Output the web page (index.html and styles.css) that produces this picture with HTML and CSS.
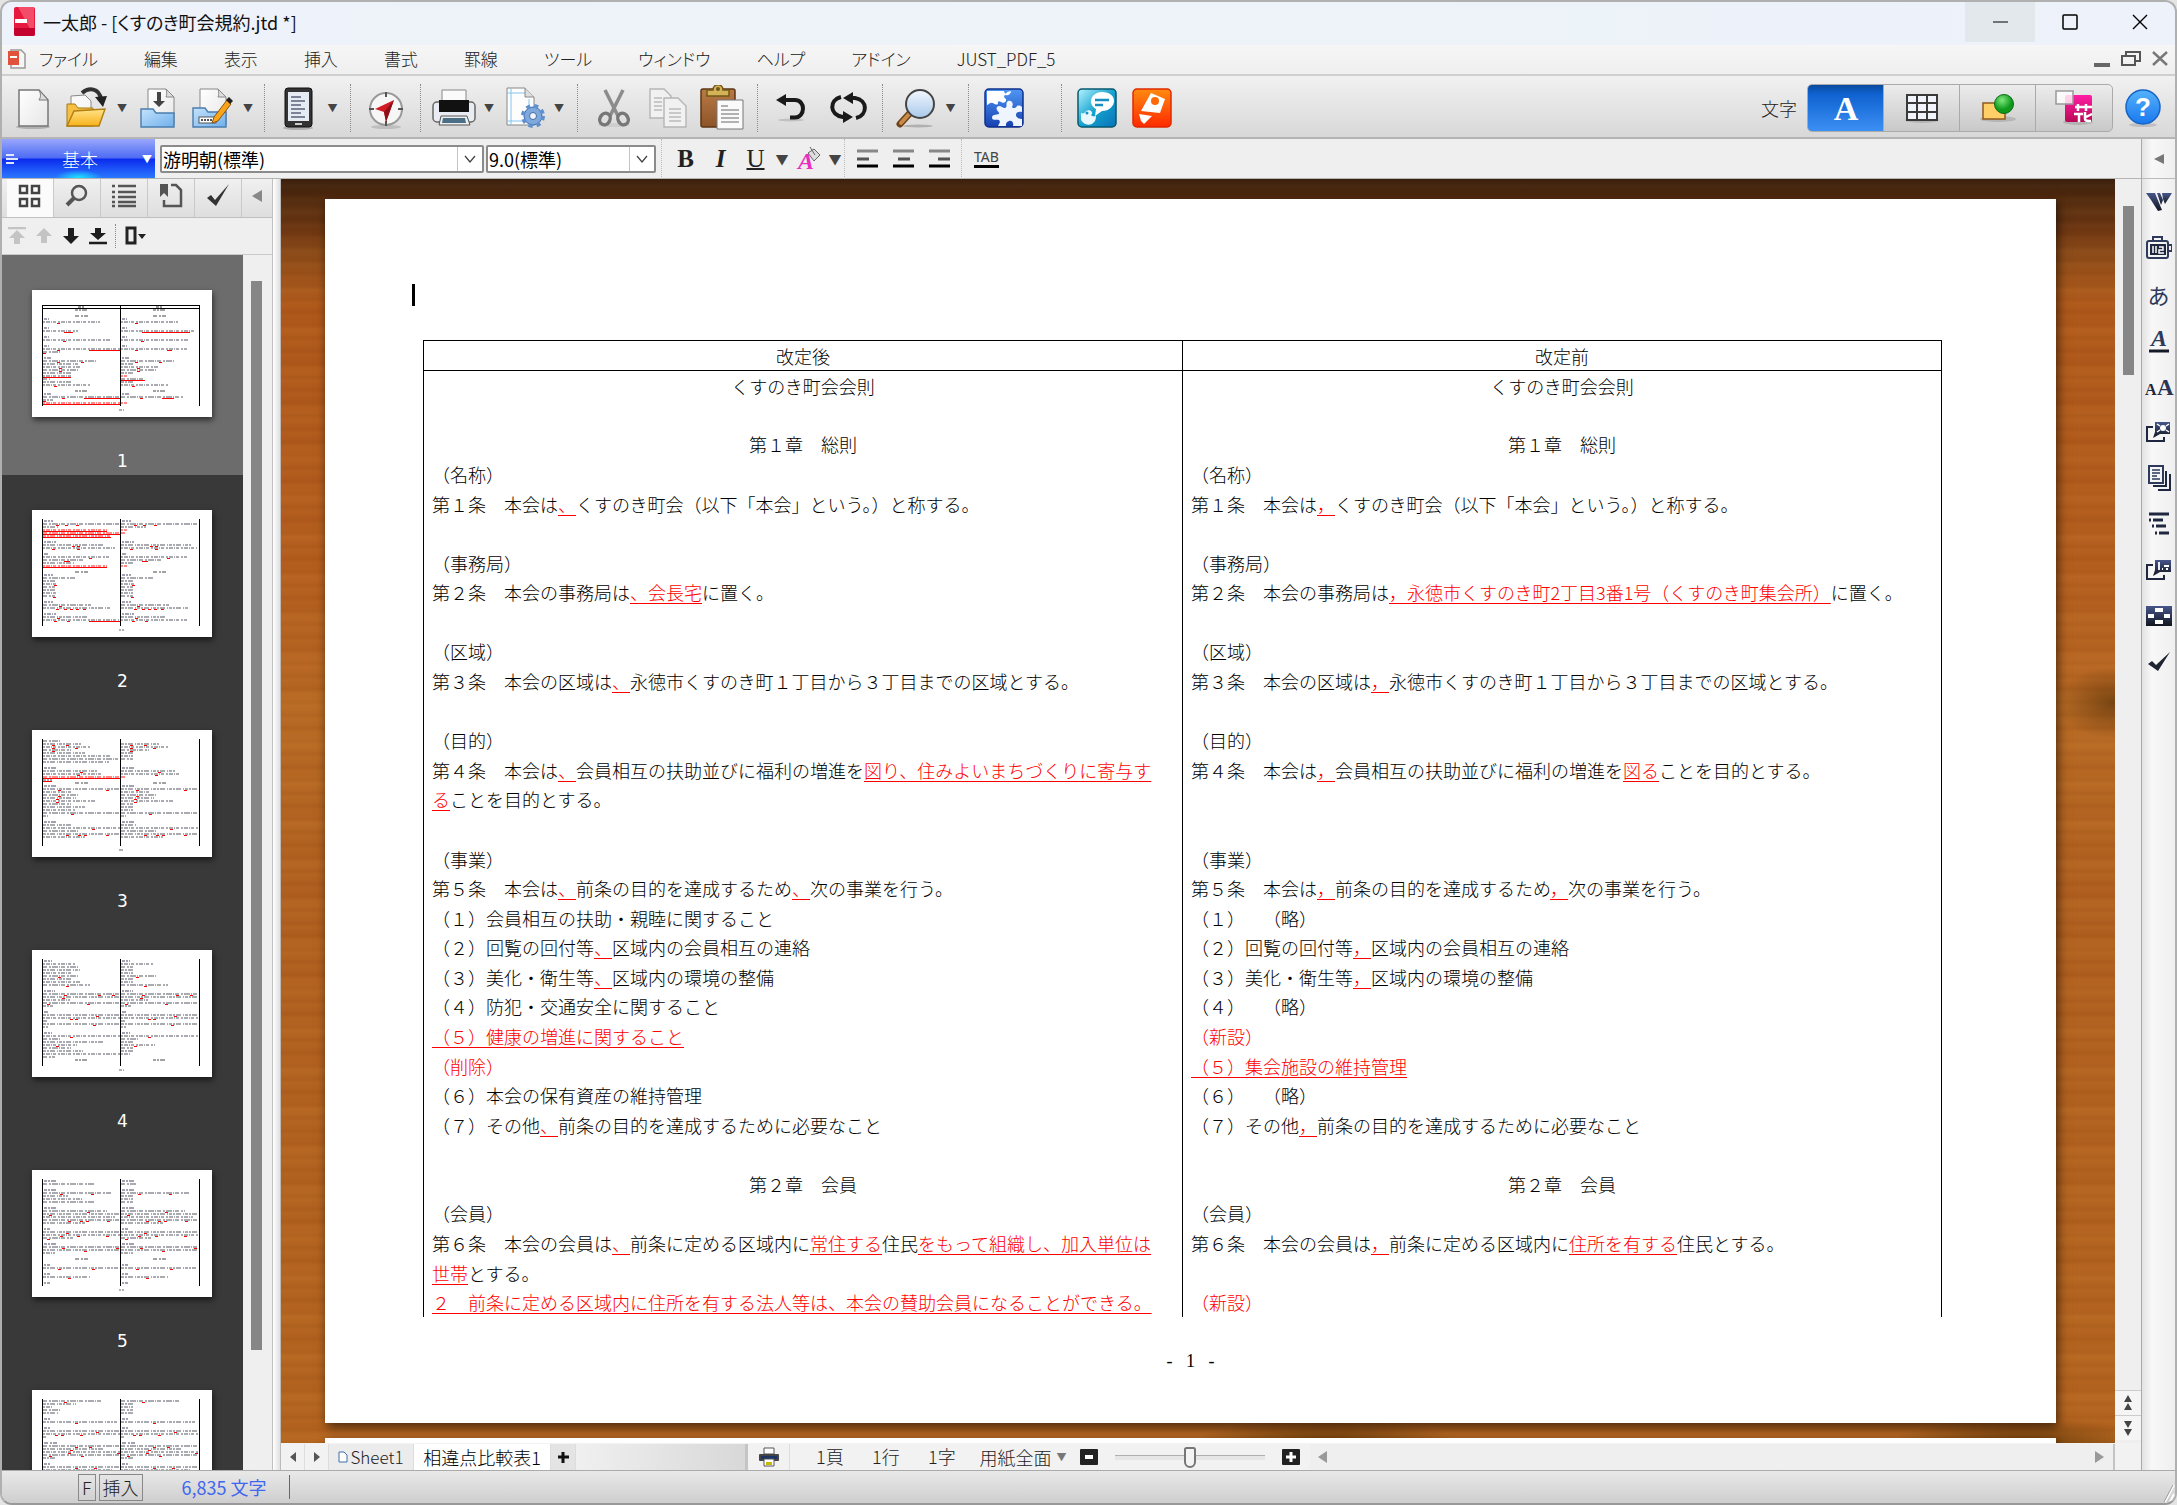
FILE: index.html
```html
<!DOCTYPE html>
<html lang="ja">
<head>
<meta charset="utf-8">
<title>一太郎 - [くすのき町会規約.jtd *]</title>
<link rel="stylesheet" href="styles.css">
</head>
<body>
<svg class="defs" width="0" height="0" aria-hidden="true">
  <defs>
    <linearGradient id="paper" x2="1" y2="1"><stop offset="0" stop-color="#fff"/><stop offset="1" stop-color="#e6e6e6"/></linearGradient>
    <linearGradient id="folderY" x2="0" y2="1"><stop offset="0" stop-color="#ffe38a"/><stop offset="1" stop-color="#f7b21a"/></linearGradient>
    <linearGradient id="folderB" x2="1" y2="1"><stop offset="0" stop-color="#c4e2fb"/><stop offset="1" stop-color="#6fb0ec"/></linearGradient>
    <linearGradient id="lens" x2="0" y2="1"><stop offset="0" stop-color="#f2f8ff"/><stop offset="1" stop-color="#a9c8ea"/></linearGradient>
    <linearGradient id="navy" x2="0" y2="1"><stop offset="0" stop-color="#46568a"/><stop offset="1" stop-color="#12161f"/></linearGradient>
    <linearGradient id="wood" x2="0" y2="1"><stop offset="0" stop-color="#b97a45"/><stop offset="1" stop-color="#8d5429"/></linearGradient>
    <linearGradient id="blueTile" x2="0" y2="1"><stop offset="0" stop-color="#4f97f5"/><stop offset="1" stop-color="#1740b0"/></linearGradient>
    <linearGradient id="cyanTile" x2="1" y2="1"><stop offset="0" stop-color="#b5f4ff"/><stop offset=".5" stop-color="#17a3d0"/><stop offset="1" stop-color="#0673b8"/></linearGradient>
    <linearGradient id="redTile" x2="0" y2="1"><stop offset="0" stop-color="#ff8a10"/><stop offset="1" stop-color="#ff2a00"/></linearGradient>
    <linearGradient id="pinkTile" x2="0" y2="1"><stop offset="0" stop-color="#ff1da4"/><stop offset="1" stop-color="#b80a54"/></linearGradient>
    <radialGradient id="green" cx=".4" cy=".3"><stop offset="0" stop-color="#7fe87f"/><stop offset="1" stop-color="#0f9a1b"/></radialGradient>
    <linearGradient id="help" x2="0" y2="1"><stop offset="0" stop-color="#55b2fb"/><stop offset="1" stop-color="#1a78ee"/></linearGradient>
  </defs>
</svg>

<div class="window">
  <header class="titlebar">
    <svg class="app-icon" width="24" height="32" viewBox="0 0 24 32"><rect x="1" y="1" width="21" height="29" rx="2" fill="#e8193f"/><path d="M5 1h16v29z" fill="#f7637c" opacity=".7"/><path d="M1 22h21v6a2 2 0 0 1-2 2H3a2 2 0 0 1-2-2z" fill="#c4002f"/><rect x="2" y="13" width="12" height="4" fill="#fff"/></svg>
    <h1 class="title">一太郎 - [くすのき町会規約.jtd *]</h1>
    <div class="caption-buttons">
      <button class="cap cap-min" aria-label="最小化"><svg width="16" height="16"><path d="M1 8h15" stroke="#000"/></svg></button>
      <button class="cap" aria-label="最大化"><svg width="16" height="16"><rect x="1" y="1" width="14" height="14" rx="1" fill="none" stroke="#000" stroke-width="1.5"/></svg></button>
      <button class="cap" aria-label="閉じる"><svg width="16" height="16"><path d="M1 1l14 14M15 1L1 15" stroke="#000" stroke-width="1.4"/></svg></button>
    </div>
  </header>

  <nav class="menubar">
    <svg class="doc-icon" width="20" height="22"><path d="M4 2h10l4 4v14H4z" fill="#f6f6f6" stroke="#999" stroke-width="1.5"/><rect x="1" y="3" width="11" height="14" fill="#e0523c"/><rect x="3" y="8" width="7" height="2" fill="#fff"/></svg>
    <button>ファイル</button><button>編集</button><button>表示</button><button>挿入</button><button>書式</button><button>罫線</button><button>ツール</button><button>ウィンドウ</button><button>ヘルプ</button><button>アドイン</button><button>JUST_PDF_5</button>
    <div class="mdi-buttons">
      <button aria-label="文書を最小化"><svg width="18" height="20"><path d="M1 16h16" stroke="#666" stroke-width="4"/></svg></button>
      <button aria-label="文書を元に戻す"><svg width="22" height="20"><path d="M6 6V3h14v9h-4" fill="none" stroke="#555" stroke-width="2"/><path d="M2 7h13v9H2z" fill="none" stroke="#555" stroke-width="2"/></svg></button>
      <button aria-label="文書を閉じる"><svg width="18" height="20"><path d="M2 3l14 13M16 3L2 16" stroke="#777" stroke-width="2.4"/></svg></button>
    </div>
  </nav>

  <div class="toolbar">
    <div class="group g-file">
      <button class="tool" aria-label="新規作成"><svg width="40" height="44"><ellipse cx="20" cy="41" rx="17" ry="2" fill="#0003"/><path d="M6 4h20l9 10v26H6z" fill="url(#paper)" stroke="#777" stroke-width="1.5"/><path d="M26 4c2 4 2 7 0 10h9z" fill="#ddd" stroke="#777"/></svg></button>
      <button class="tool" aria-label="開く"><svg width="44" height="44"><path d="M8 22V10l14-1 6 6v10z" fill="#f8f8f8" stroke="#888"/><path d="M4 18h8l3 4h15v18H4z" fill="#f5c044" stroke="#a87812"/><path d="M11 25l31-2-6 17H4z" fill="url(#folderY)" stroke="#b07d10" stroke-width="1.4"/><path d="M19 7c7-6 17-5 19 6" fill="none" stroke="#333" stroke-width="4"/><path d="M32 11l12-1-4 11z" fill="#222"/></svg></button>
      <button class="arrow" aria-label="開くメニュー">▼</button>
      <button class="tool" aria-label="上書保存"><svg width="44" height="44"><path d="M11 3h18l8 8v28H11z" fill="url(#paper)" stroke="#888"/><path d="M29 3c1 3 1 6 0 8h8z" fill="#ddd" stroke="#888"/><path d="M20 6v9h-4l6 6 6-6h-4V6z" fill="#444"/><path d="M4 23h12l3 4h18v14H4z" fill="url(#folderB)" stroke="#4a7dad" stroke-width="1.4"/></svg></button>
      <button class="tool" aria-label="名前を付けて保存"><svg width="44" height="44"><path d="M11 3h18l8 8v28H11z" fill="url(#paper)" stroke="#888"/><path d="M29 3c1 3 1 6 0 8h8z" fill="#ddd" stroke="#888"/><path d="M4 22h12l3 4h18v15H4z" fill="url(#folderB)" stroke="#4a7dad" stroke-width="1.4"/><rect x="10" y="31" width="17" height="6" fill="#fff" stroke="#555"/><path d="M12 34h12" stroke="#555" stroke-width="2" stroke-dasharray="2 1"/><path d="M25 31l13-17 4 4-13 17-6 2z" fill="#f8a51b" stroke="#8a5510"/><path d="M37 14l3-3 4 4-3 3z" fill="#222"/></svg></button>
      <button class="arrow" aria-label="保存メニュー">▼</button>
    </div>
    <div class="group g-view">
      <button class="tool" aria-label="画面表示"><svg width="40" height="46"><ellipse cx="20" cy="43" rx="15" ry="2" fill="#0003"/><rect x="7" y="3" width="27" height="39" rx="3" fill="#333" stroke="#111"/><rect x="10" y="7" width="21" height="29" fill="#e6eaf2"/><path d="M13 12h10M13 16h14M13 20h10M13 24h14M13 28h10M13 32h14" stroke="#59627a" stroke-width="1.6"/><rect x="17" y="38" width="7" height="2" fill="#ccc"/></svg></button>
      <button class="arrow" aria-label="画面表示メニュー">▼</button>
    </div>
    <div class="group g-nav">
      <button class="tool" aria-label="ナビ"><svg width="40" height="44"><ellipse cx="20" cy="41" rx="15" ry="2" fill="#0002"/><circle cx="20" cy="23" r="16" fill="#f6f6f6" stroke="#999" stroke-width="2"/><path d="M20 6v5M20 35v5M3 23h5M32 23h5" stroke="#555" stroke-width="2"/><path d="M28 14L9 23l9 3 2 10z" fill="#d11c25"/><path d="M28 14L18 26l2 10z" fill="#8d0f18"/></svg></button>
    </div>
    <div class="group g-print">
      <button class="tool" aria-label="印刷"><svg width="46" height="44"><path d="M11 4h24v14H11z" fill="#fafafa" stroke="#888"/><rect x="2" y="16" width="42" height="20" rx="4" fill="#e9edf3" stroke="#666" stroke-width="1.5"/><path d="M8 14h30v12H8z" fill="#111"/><path d="M10 30h26l3 9H8z" fill="#eee" stroke="#555"/><path d="M12 32h22l1 5H11z" fill="#4b6f86"/></svg></button>
      <button class="arrow" aria-label="印刷メニュー">▼</button>
      <button class="tool" aria-label="用紙設定"><svg width="44" height="46"><path d="M5 3h18l9 9v28H5z" fill="#fdfdfd" stroke="#888"/><path d="M9 3v37M5 8h20M5 36h20M27 14v26" stroke="#84c4ef"/><path d="M23 3v9h9" fill="#ddd" stroke="#888"/><circle cx="31" cy="31" r="9" fill="#7fa8dc" stroke="#3d6ba8"/><circle cx="31" cy="31" r="10" fill="none" stroke="#5f8fce" stroke-width="4" stroke-dasharray="4 4"/><circle cx="31" cy="31" r="3.500" fill="#f2f6fb" stroke="#3d6ba8"/></svg></button>
      <button class="arrow" aria-label="用紙設定メニュー">▼</button>
    </div>
    <div class="group g-edit">
      <button class="tool" aria-label="切り取り"><svg width="36" height="44"><ellipse cx="18" cy="39" rx="16" ry="2" fill="#0001"/><path d="M9 4l13 26M27 4L14 30" stroke="#8c8c8c" stroke-width="3.5"/><ellipse cx="9" cy="33" rx="5" ry="6" fill="none" stroke="#777" stroke-width="3.4" transform="rotate(28 9 33)"/><ellipse cx="27" cy="33" rx="5" ry="6" fill="none" stroke="#777" stroke-width="3.4" transform="rotate(-28 27 33)"/></svg></button>
      <button class="tool" aria-label="コピー"><svg width="42" height="44"><g fill="#f1f1f1" stroke="#b5b5b5" stroke-width="1.4"><path d="M3 3h14l7 7v22H3z"/><path d="M17 12h14l8 8v21H17z"/></g><path d="M7 12h8M7 16h8M7 20h8M7 24h8M22 23h12M22 27h12M22 31h12M22 35h12" stroke="#bbb" stroke-width="1.5"/></svg></button>
      <button class="tool" aria-label="貼り付け"><svg width="46" height="46"><rect x="2" y="4" width="34" height="38" rx="2" fill="url(#wood)" stroke="#5c3413" stroke-width="1.5"/><path d="M8 5h6c0-7 10-7 10 0h6v6H8z" fill="#d5b257" stroke="#6f5818" stroke-width="1.5"/><circle cx="19" cy="4" r="2" fill="#6f5818"/><path d="M18 15h26v29H18z" fill="#fafafa" stroke="#777"/><path d="M22 21h7M22 25h18M22 29h18M22 33h18M22 37h18" stroke="#999" stroke-width="1.5"/></svg></button>
    </div>
    <div class="group g-undo">
      <button class="tool" aria-label="取り消し"><svg width="34" height="34"><ellipse cx="16" cy="29" rx="13" ry="1.5" fill="#0002"/><path d="M10 9h10c5 0 8 4 8 8.500s-3 9-8 9h-5" fill="none" stroke="#1a1a1a" stroke-width="4"/><path d="M1 9l10-6v12z" fill="#1a1a1a"/></svg></button>
      <button class="tool" aria-label="繰り返し"><svg width="40" height="34"><path d="M13 6C1 9 1 24 15 26h3M28 27c12-3 12-18-1-20h-5" fill="none" stroke="#1a1a1a" stroke-width="4"/><path d="M15 7l10-6v12zM25 26l-10-6v12z" fill="#1a1a1a"/></svg></button>
    </div>
    <div class="group g-find">
      <button class="tool" aria-label="検索"><svg width="40" height="44"><ellipse cx="22" cy="40" rx="15" ry="1.500" fill="#0003"/><path d="M14 27L4 38" stroke="#6f4317" stroke-width="7" stroke-linecap="round"/><path d="M14 27L5 37" stroke="#c98b49" stroke-width="4" stroke-linecap="round"/><circle cx="24" cy="18" r="14" fill="url(#lens)" stroke="#444" stroke-width="2"/></svg></button>
      <button class="arrow" aria-label="検索メニュー">▼</button>
    </div>
    <div class="group g-addon">
      <button class="tool" aria-label="オプション"><svg width="42" height="44"><rect x="2" y="3" width="38" height="38" rx="4" fill="url(#blueTile)" stroke="#0f2f8c" stroke-width="1.500"/><path d="M4 5h17c0 3 3 3 3 1l4-1c0 3-3 5-5 4-3 0-2 3 0 4 1 3-3 5-5 3-2-2-4 0-3 2-3 2-5-2-7-1-2 0-3 2-4 2z" fill="#fff"/><path d="M25 15c4-1 6 3 4 6 1 2 4 1 5-1 2-1 4 0 5 1v5c-3-1-6 0-6 3s4 4 6 4v7h-9c1-3-1-6-4-5s-3 3-3 5h-8c1-2 3-4 1-6-3-1-6 1-7-2 0-4 4-3 7-4 1-2-4-4-2-7 3-3 5 1 8 1 3-1 0-5 3-7z" fill="#eef5ff"/></svg></button>
    </div>
    <div class="group g-apps">
      <button class="tool" aria-label="アイデア"><svg width="42" height="44"><rect x="2" y="3" width="38" height="38" rx="4" fill="url(#cyanTile)" stroke="#06576d" stroke-width="1.500"/><path d="M26 6c8 0 12 4 12 9s-5 10-12 10l-7 5 1-7c-9-5-5-17 6-17z" fill="#fff"/><path d="M19 14h14M19 19h8" stroke="#178fc0" stroke-width="2.500"/><path d="M5 27c2 1 4 0 5-2 3-2 7 0 6 3-2 1 0 3 4 2 0 12-14 10-15 3z" fill="#e8f8fd"/><circle cx="11" cy="27" r="1.500" fill="#178fc0"/></svg></button>
      <button class="tool" aria-label="パレット"><svg width="42" height="44"><rect x="2" y="3" width="38" height="38" rx="4" fill="url(#redTile)" stroke="#e02800" stroke-width="1.500"/><path d="M20 7l14 6-5 14-19-2z" fill="#fff"/><circle cx="24" cy="15" r="4" fill="#ff6a08"/><path d="M8 28l13 2-8 8-3-3z" fill="#fff"/></svg></button>
    </div>
    <div class="mode">
      <span class="mode-label">文字</span>
      <div class="mode-set">
        <button class="on" aria-label="文字"><svg width="30" height="36"><text x="15" y="30" text-anchor="middle" class="serif-a">A</text></svg></button>
        <button aria-label="罫線"><svg width="36" height="32"><ellipse cx="18" cy="28" rx="17" ry="3" fill="#0002"/><rect x="2" y="2" width="32" height="27" fill="#3a3a3a"/><path d="M4 4h8v6H4zM14 4h8v6h-8zM24 4h8v6h-8zM4 12h8v7H4zM14 12h8v7h-8zM24 12h8v7h-8zM4 21h8v6H4zM14 21h8v6h-8zM24 21h8v6h-8z" fill="#f1f4fa"/></svg></button>
        <button aria-label="作図"><svg width="38" height="34"><ellipse cx="19" cy="28" rx="18" ry="3" fill="#0002"/><rect x="4" y="12" width="22" height="16" fill="#ffd068" stroke="#8f5a1c" stroke-width="1.500"/><circle cx="25" cy="13" r="9.500" fill="url(#green)" stroke="#0c6b13"/></svg></button>
        <button aria-label="テンプレート"><svg width="40" height="36"><ellipse cx="24" cy="32" rx="15" ry="3" fill="#0002"/><rect x="11" y="5" width="27" height="27" rx="2" fill="url(#pinkTile)"/><path d="M21 17h17M24 14v7M32 14v7M20 24h9M25 24v8M31 22v7c0 2 2 2 6 2M38 24l-6 3" stroke="#fff" stroke-width="2.500" fill="none"/><rect x="2" y="1" width="17" height="13" fill="#fffc" stroke="#999" stroke-width="1.500"/></svg></button>
      </div>
      <button class="help" aria-label="ヘルプ"><svg width="38" height="40"><ellipse cx="19" cy="37" rx="14" ry="2" fill="#0002"/><circle cx="19" cy="19" r="17" fill="url(#help)" stroke="#1664c4" stroke-width="1.500"/><text x="19" y="28" text-anchor="middle" class="help-q">?</text></svg></button>
    </div>
  </div>

  <div class="body">
    <div class="content">
      <div class="formatbar">
        <button class="preset"><svg width="12" height="12"><path d="M0 2h8M0 6h12M0 10h8" stroke="#dfe6ff" stroke-width="2"/></svg><span>基本</span><i>▼</i></button>
        <div class="combo combo-font"><select aria-label="フォント"><option>游明朝(標準)</option></select><svg width="25" height="24"><path d="M7 9l5 6 5-6" fill="none" stroke="#444" stroke-width="1.300"/></svg></div>
        <div class="combo combo-size"><select aria-label="文字サイズ"><option>9.0(標準)</option></select><svg width="25" height="24"><path d="M7 9l5 6 5-6" fill="none" stroke="#444" stroke-width="1.300"/></svg></div>
        <div class="fgroup f-style">
          <button class="letter bold">B</button><button class="letter italic">I</button><button class="letter under">U</button><button class="arrow big" aria-label="下線メニュー">▼</button>
          <button class="letter" aria-label="文字色"><svg width="30" height="30"><text x="12" y="25" text-anchor="middle" class="color-a">A</text><path d="M14 9l6-4 6 6-6 6z" fill="#ddd" stroke="#666"/><path d="M16 3l5 8" stroke="#666"/></svg></button><button class="arrow big" aria-label="文字色メニュー">▼</button>
        </div>
        <div class="fgroup f-align">
          <button aria-label="左寄せ"><svg width="22" height="20"><path d="M0 2h21" stroke="#888" stroke-width="3"/><path d="M0 10h12" stroke="#555" stroke-width="3"/><path d="M0 17h21" stroke="#000" stroke-width="3"/></svg></button>
          <button aria-label="センタリング"><svg width="22" height="20"><path d="M0 2h21" stroke="#888" stroke-width="3"/><path d="M5 10h12" stroke="#555" stroke-width="3"/><path d="M0 17h21" stroke="#000" stroke-width="3"/></svg></button>
          <button aria-label="右寄せ"><svg width="22" height="20"><path d="M0 2h21" stroke="#888" stroke-width="3"/><path d="M9 10h12" stroke="#555" stroke-width="3"/><path d="M0 17h21" stroke="#000" stroke-width="3"/></svg></button>
        </div>
        <button class="tab-btn">TAB</button>
      </div>

      <div class="workspace">
        <aside class="panel">
          <div class="panel-tabs">
            <button class="on" aria-label="ページ"><svg width="24" height="24"><path d="M2 2h7v7H2zM14 2h7v7h-7zM2 15h7v7H2zM14 15h7v7h-7z" fill="none" stroke="#444" stroke-width="2.500"/></svg></button>
            <button aria-label="検索"><svg width="24" height="24"><circle cx="14" cy="9" r="7" fill="none" stroke="#555" stroke-width="2.500"/><path d="M9 14l-7 7" stroke="#555" stroke-width="4"/></svg></button>
            <button aria-label="目次"><svg width="24" height="24"><path d="M0 2h3M0 8h3M0 13h3M0 18h3M0 22h3M6 2h18M6 8h18M6 13h18M6 18h18M6 22h18" stroke="#555" stroke-width="2.500"/></svg></button>
            <button aria-label="しおり"><svg width="24" height="26"><path d="M1 1h8v13l-4-4-4 4z" fill="#555"/><path d="M12 2h5l5 5v16H5v-6" fill="none" stroke="#555" stroke-width="2.500"/></svg></button>
            <button aria-label="校正"><svg width="24" height="24"><path d="M1 14l4-3 4 5L23 0 10 22z" fill="#333"/></svg></button>
            <button class="fold" aria-label="閉じる"><svg width="10" height="12"><path d="M0 6l10-6v12z" fill="#888"/></svg></button>
          </div>
          <div class="panel-tools">
            <button aria-label="先頭ページ" disabled><svg width="20" height="18"><path d="M1 1h18" stroke="#c4c4c4" stroke-width="2.500"/><path d="M10 3l8 8h-5v6H7v-6H2z" fill="#c4c4c4"/></svg></button>
            <button aria-label="前ページ" disabled><svg width="20" height="18"><path d="M10 1l8 8h-5v7H7V9H2z" fill="#c4c4c4"/></svg></button>
            <button aria-label="次ページ"><svg width="20" height="18"><path d="M10 17l8-8h-5V1H7v8H2z" fill="#1d1d1d"/></svg></button>
            <button aria-label="最終ページ"><svg width="20" height="18"><path d="M10 13l8-7h-5V1H7v5H2z" fill="#1d1d1d"/><path d="M1 16h18" stroke="#1d1d1d" stroke-width="2.500"/></svg></button>
            <button class="opt" aria-label="表示方法"><svg width="24" height="20"><path d="M3 2h8v15H3z" fill="none" stroke="#222" stroke-width="3"/><path d="M14 8h8l-4 5z" fill="#222"/></svg></button>
          </div>
          <div class="panel-body">
            <ol class="thumbs" id="thumbs"></ol>
            <div class="vbar"><div class="vbar-thumb"></div></div>
          </div>
        </aside>
        <div class="splitter"></div>
        <div class="work">
          <div class="canvas-row">
            <main class="canvas">
              <article class="sheet">
                <p class="caret-line"><span class="caret"></span></p>
                <table class="compare">
                  <thead><tr><th>改定後</th><th>改定前</th></tr></thead>
                  <tbody>
                    <tr class="mid"><td>くすのき町会会則</td><td>くすのき町会会則</td></tr>
                    <tr><td></td><td></td></tr>
                    <tr class="mid"><td>第１章　総則</td><td>第１章　総則</td></tr>
                    <tr><td>（名称）</td><td>（名称）</td></tr>
                    <tr><td>第１条　本会は<ins>、</ins>くすのき町会（以下「本会」という。）と称する。</td><td>第１条　本会は<ins>，</ins>くすのき町会（以下「本会」という。）と称する。</td></tr>
                    <tr><td></td><td></td></tr>
                    <tr><td>（事務局）</td><td>（事務局）</td></tr>
                    <tr><td>第２条　本会の事務局は<ins>、会長宅</ins>に置く。</td><td>第２条　本会の事務局は<ins>，永徳市くすのき町2丁目3番1号（くすのき町集会所）</ins>に置く。</td></tr>
                    <tr><td></td><td></td></tr>
                    <tr><td>（区域）</td><td>（区域）</td></tr>
                    <tr><td>第３条　本会の区域は<ins>、</ins>永徳市くすのき町１丁目から３丁目までの区域とする。</td><td>第３条　本会の区域は<ins>，</ins>永徳市くすのき町１丁目から３丁目までの区域とする。</td></tr>
                    <tr><td></td><td></td></tr>
                    <tr><td>（目的）</td><td>（目的）</td></tr>
                    <tr><td>第４条　本会は<ins>、</ins>会員相互の扶助並びに福利の増進を<ins>図り、住みよいまちづくりに寄与す</ins></td><td>第４条　本会は<ins>，</ins>会員相互の扶助並びに福利の増進を<ins>図る</ins>ことを目的とする。</td></tr>
                    <tr><td><ins>る</ins>ことを目的とする。</td><td></td></tr>
                    <tr><td></td><td></td></tr>
                    <tr><td>（事業）</td><td>（事業）</td></tr>
                    <tr><td>第５条　本会は<ins>、</ins>前条の目的を達成するため<ins>、</ins>次の事業を行う。</td><td>第５条　本会は<ins>，</ins>前条の目的を達成するため<ins>，</ins>次の事業を行う。</td></tr>
                    <tr><td>（１）会員相互の扶助・親睦に関すること</td><td class="full">（１）　（略）</td></tr>
                    <tr><td>（２）回覧の回付等<ins>、</ins>区域内の会員相互の連絡</td><td>（２）回覧の回付等<ins>，</ins>区域内の会員相互の連絡</td></tr>
                    <tr><td>（３）美化・衛生等<ins>、</ins>区域内の環境の整備</td><td>（３）美化・衛生等<ins>，</ins>区域内の環境の整備</td></tr>
                    <tr><td>（４）防犯・交通安全に関すること</td><td class="full">（４）　（略）</td></tr>
                    <tr><td><ins>（５）健康の増進に関すること</ins></td><td><em>（新設）</em></td></tr>
                    <tr><td><em>（削除）</em></td><td><ins>（５）集会施設の維持管理</ins></td></tr>
                    <tr><td>（６）本会の保有資産の維持管理</td><td class="full">（６）　（略）</td></tr>
                    <tr><td>（７）その他<ins>、</ins>前条の目的を達成するために必要なこと</td><td>（７）その他<ins>，</ins>前条の目的を達成するために必要なこと</td></tr>
                    <tr><td></td><td></td></tr>
                    <tr class="mid"><td>第２章　会員</td><td>第２章　会員</td></tr>
                    <tr><td>（会員）</td><td>（会員）</td></tr>
                    <tr><td>第６条　本会の会員は<ins>、</ins>前条に定める区域内に<ins>常住する</ins>住民<ins>をもって組織し、加入単位は</ins></td><td>第６条　本会の会員は<ins>，</ins>前条に定める区域内に<ins>住所を有する</ins>住民とする。</td></tr>
                    <tr><td><ins>世帯</ins>とする。</td><td></td></tr>
                    <tr><td><ins>２　前条に定める区域内に住所を有する法人等は、本会の賛助会員になることができる。</ins></td><td><em>（新設）</em></td></tr>
                  </tbody>
                </table>
                <p class="folio">-&nbsp;&nbsp; 1 &nbsp;&nbsp;-</p>
              </article>
              <article class="sheet next"></article>
            </main>
            <div class="doc-scroll">
              <div class="vbar"><div class="vbar-thumb"></div></div>
              <button aria-label="前ページ"><svg width="12" height="16"><path d="M6 0l4 7H2zM6 8l4 7H2z" fill="#444"/></svg></button>
              <button aria-label="次ページ"><svg width="12" height="16"><path d="M2 1h8L6 8zM2 9h8l-4 7z" fill="#444"/></svg></button>
            </div>
          </div>
          <div class="sheetbar">
            <button class="nudge" aria-label="前のシート"><svg width="6" height="10"><path d="M6 0v10L0 5z" fill="#555"/></svg></button>
            <button class="nudge" aria-label="次のシート"><svg width="6" height="10"><path d="M0 0v10l6-5z" fill="#555"/></svg></button>
            <button class="stab"><svg width="10" height="12"><path d="M1 1h5l3 3v7H1z" fill="#fff" stroke="#3f6fa8"/></svg>Sheet1</button>
            <button class="stab on">相違点比較表1</button>
            <button class="add" aria-label="シートの追加"><svg width="11" height="11"><path d="M5 0v11M0 5h11" stroke="#111" stroke-width="3"/></svg></button>
            <div class="filler"></div>
            <button class="print" aria-label="印刷"><svg width="22" height="20"><path d="M6 1h10v6H6z" fill="#fff" stroke="#555"/><rect x="1" y="7" width="20" height="7" rx="1" fill="#444"/><path d="M3 9h16v3H3z" fill="#1d3566"/><path d="M6 12h10v7H6z" fill="#fff" stroke="#555"/><path d="M8 15h6v3H8z" fill="#c9b900"/></svg></button>
            <span class="pos">1頁</span><span class="pos">1行</span><span class="pos">1字</span>
            <button class="zoom">用紙全面<i>▼</i></button>
            <button class="pm" aria-label="縮小"><svg width="18" height="16"><rect width="18" height="16" rx="1" fill="#222"/><path d="M5 8h8" stroke="#fff" stroke-width="4"/></svg></button>
            <input type="range" aria-label="表示倍率" min="0" max="100" value="50">
            <button class="pm" aria-label="拡大"><svg width="18" height="16"><rect width="18" height="16" rx="1" fill="#222"/><path d="M4 8h10M9 3v10" stroke="#fff" stroke-width="3"/></svg></button>
            <div class="hbar"><button aria-label="左へ"><svg width="9" height="12"><path d="M9 0v12L0 6z" fill="#999"/></svg></button><button aria-label="右へ"><svg width="9" height="12"><path d="M0 0v12l9-6z" fill="#999"/></svg></button></div>
            <div class="corner"></div>
          </div>
        </div>
      </div>
    </div>

    <nav class="sidebar">
      <button class="fold" aria-label="ツールパレット"><svg width="12" height="12"><path d="M1 6l10-5v10z" fill="#777"/></svg></button>
      <button aria-label="校正"><svg width="26" height="20"><path d="M0 1h9l2 5 5 12-4 1L5 8z" fill="url(#navy)"/><path d="M11 1h3l3 7-2 5zM16 1h10l-7 11-2-5z" fill="url(#navy)"/></svg></button>
      <button aria-label="文字数"><svg width="26" height="24"><rect x="1" y="5" width="21" height="17" rx="2" fill="none" stroke="#2e3a5c" stroke-width="2"/><path d="M7 5V1h9v4M23 9h3v6h-3" fill="none" stroke="#2e3a5c" stroke-width="2"/><rect x="4" y="8" width="16" height="11" fill="#1f2740"/><path d="M7 10v7M10 10v7M13 11h4v3h-4v3h5" stroke="#fff" stroke-width="1.500" fill="none"/></svg></button>
      <button class="kana">あ</button>
      <button aria-label="文字スタイル"><svg width="30" height="32"><text x="15" y="22" text-anchor="middle" class="style-a">A</text><path d="M5 27h20" stroke="#151a28" stroke-width="3"/></svg></button>
      <button aria-label="文字サイズ"><svg width="32" height="30"><text x="2" y="24" class="aa-s">A</text><text x="14" y="24" class="aa-l">A</text></svg></button>
      <button aria-label="オブジェクト"><svg width="26" height="22"><path d="M7 6H1v14h17v-4" fill="none" stroke="#1f2740" stroke-width="2"/><path d="M11 1h13v12H14l-7 4 2-6V1z" fill="url(#navy)"/><circle cx="17" cy="7" r="3" fill="#fff"/><path d="M11 3l3 2M23 3l-3 2M11 11l3-2M23 11l-3-2" stroke="#fff" stroke-width="1.500"/></svg></button>
      <button aria-label="文書スタイル"><svg width="26" height="28"><path d="M3 2h14v17H3z" fill="none" stroke="#2e3a5c" stroke-width="2"/><path d="M6 6h8M6 9h8M6 12h5M6 15h8" stroke="#2e3a5c" stroke-width="1.500"/><path d="M7 22h13V7M12 26h12V10" fill="none" stroke="#1f2740" stroke-width="2"/></svg></button>
      <button aria-label="段落"><svg width="26" height="24"><path d="M3 2h20M3 8h2M7 8h10M6 14h2M10 14h10M9 21h2M13 21h10" stroke="#1f2740" stroke-width="2.800"/></svg></button>
      <button aria-label="箇条書き"><svg width="26" height="22"><path d="M7 6H1v14h17v-4" fill="none" stroke="#1f2740" stroke-width="2"/><path d="M11 1h14v12H14l-7 4 2-6V1z" fill="url(#navy)"/><path d="M13 3v8M16 10h1M18 7h5M20 10h2" stroke="#fff" stroke-width="1.800"/></svg></button>
      <button aria-label="表"><svg width="26" height="20"><rect width="26" height="20" fill="url(#navy)"/><path d="M9 2h8v4H9zM2 8h6v4H2zM18 8h6v4h-6zM9 14h8v4H9z" fill="#fff"/></svg></button>
      <button aria-label="確認"><svg width="24" height="20"><path d="M1 12l4-3 4 4L23 0 11 19z" fill="#1f2433"/></svg></button>
    </nav>
  </div>

  <footer class="status">
    <button class="flag">F</button><button class="flag">挿入</button>
    <span class="count">6,835 文字</span>
    <svg class="grip" width="12" height="20"><path d="M2 19L11 2M7 19l4-8" stroke="#fff" stroke-width="2"/><path d="M1 19L10 2" stroke="#999"/></svg>
  </footer>
</div>
<script src="thumbs.js"></script>
</body>
</html>
```

FILE: styles.css
```css
* { box-sizing: border-box; }
html, body { height: 100%; }
body {
  margin: 0;
  background: #e4e4e4;
  font-family: "Noto Sans CJK JP", sans-serif;
  font-size: 17px;
  line-height: 24px;
  color: #222;
}
button, select, input { font: inherit; color: inherit; margin: 0; }
button {
  display: flex;
  align-items: center;
  justify-content: center;
  flex: none;
  padding: 0;
  border: 0;
  background: none;
  white-space: nowrap;
}
svg { display: block; flex: none; }
.defs { position: absolute; }
i { font-style: normal; }

.window {
  display: flex;
  flex-direction: column;
  height: 100vh;
  overflow: hidden;
  border: 2px solid #b0b0b0;
  border-bottom-color: #999;
  border-radius: 12px;
  background: #efefef;
}

/* title and menu */
.titlebar {
  display: flex;
  align-items: center;
  flex: none;
  height: 43px;
  padding: 0 0 3px 11px;
  background: linear-gradient(90deg, #eef2fb, #edf3f8 45%, #edf2fb);
}
.title {
  flex: 1;
  margin: 0;
  padding-left: 6px;
  font-size: 18px;
  font-weight: 400;
  color: #111;
  font-feature-settings: "palt";
}
.caption-buttons { display: flex; align-self: stretch; }
.cap { width: 70px; }
.cap-min { background: #e3e8ed; }
.menubar {
  display: flex;
  align-items: center;
  flex: none;
  gap: 46px;
  height: 31px;
  padding: 0 6px 2px 5px;
  border-bottom: 2px solid #cfcfcf;
  background: linear-gradient(#f6f6f6, #efefef);
  font-size: 17px;
  font-weight: 300;
  font-feature-settings: "palt";
}
.menubar .doc-icon { margin-right: -34px; }
.mdi-buttons { display: flex; gap: 9px; margin-left: auto; }

/* main toolbar */
.toolbar {
  display: flex;
  align-items: center;
  flex: none;
  height: 63px;
  padding-top: 2px;
  border-bottom: 2px solid #b4b4b4;
  background: linear-gradient(#f1f1f1, #d8d8d8);
}
.group {
  display: flex;
  align-items: center;
  justify-content: center;
  flex: none;
  gap: 2px;
  height: 48px;
  border-right: 1px dotted #8c8c8c;
}
.tool { width: 48px; height: 48px; }
.arrow { width: 18px; font-size: 10px; color: #444; }
.arrow.big { font-size: 13px; }
.g-file { width: 263px; gap: 4px; }
.g-view { width: 86px; }
.g-nav { width: 70px; }
.g-print { width: 157px; }
.g-edit { width: 180px; gap: 6px; }
.g-undo { width: 125px; gap: 8px; }
.g-find { width: 86px; }
.g-addon { width: 93px; justify-content: flex-start; padding-left: 11px; }
.g-apps { gap: 7px; padding-left: 11px; border-right: 0; }
.mode { display: flex; align-items: center; gap: 10px; margin-left: auto; padding-right: 12px; font-weight: 300; }
.mode-label { font-size: 18px; }
.mode-set {
  display: flex;
  height: 48px;
  border: 1px solid #aaa;
  border-radius: 5px;
  background: linear-gradient(#ececec, #c9c9c9);
  overflow: hidden;
}
.mode-set button { width: 76px; border-right: 1px solid #aaa; }
.mode-set button:last-child { border-right: 0; }
.mode-set .on { background: linear-gradient(#0a4a9e, #0f62d0 20%, #3c90f4); }
.help { width: 40px; }
.serif-a { font: 700 34px "Liberation Serif", serif; fill: #fff; }
.help-q { font: 700 26px "Liberation Sans", sans-serif; fill: #fff; }

/* body */
.body { display: flex; flex: 1; min-height: 0; }
.content { display: flex; flex-direction: column; flex: 1; min-width: 0; }
.formatbar {
  display: flex;
  align-items: center;
  flex: none;
  height: 40px;
  border-bottom: 1px solid #b4b4b4;
  background: #efefef;
}
.preset {
  justify-content: space-between;
  width: 153px;
  height: 39px;
  padding: 0 3px 0 4px;
  background:
    radial-gradient(ellipse 24px 8px at 50% 100%, #19e8ff, #19e8ff00),
    linear-gradient(#98a6fb, #4f6cf4 48%, #0c2cee 52%, #2b78ff);
  color: #fff;
  font-size: 18px;
  font-weight: 300;
}
.preset i { font-size: 10px; }
.combo { position: relative; flex: none; height: 28px; border: 2px solid #8b8b8b; border-radius: 2px; background: #fff; }
.combo select {
  appearance: none;
  width: 100%;
  height: 24px;
  padding: 0 28px 0 1px;
  border: 0;
  background: none;
  font-size: 18px;
  font-weight: 400;
  line-height: 24px;
  color: #000;
}
.combo svg { position: absolute; top: 0; right: 0; border-left: 1px solid #c4c4c4; pointer-events: none; }
.combo-font { width: 324px; margin-left: 5px; }
.combo-size { width: 170px; margin-left: 2px; }
.fgroup { display: flex; align-items: center; height: 40px; border-right: 1px dotted #bbb; }
.f-style { width: 184px; margin-left: 5px; padding-left: 6px; border-left: 1px dotted #bbb; }
.f-align { width: 117px; gap: 14px; padding-left: 12px; }
.letter { width: 35px; font: 400 25px "Liberation Serif", serif; color: #222; }
.bold { font-weight: 700; }
.italic { font-style: italic; font-weight: 700; }
.under { text-decoration: underline; text-decoration-thickness: 2px; }
.color-a { font: italic 700 24px "Liberation Serif", serif; fill: #ea2fc0; }
.tab-btn { margin-left: 12px; border-bottom: 3px solid #000; font: 400 14px/16px "Noto Sans", sans-serif; color: #444; }

.workspace { display: flex; flex: 1; min-height: 0; }
.panel { display: flex; flex-direction: column; flex: none; width: 270px; min-height: 0; }
.panel-tabs {
  display: flex;
  flex: none;
  height: 39px;
  padding-left: 5px;
  border-bottom: 1px solid #c0c0c0;
  background: linear-gradient(#f0f0f0, #dedede);
}
.panel-tabs button { width: 47px; padding-bottom: 4px; border-right: 1px solid #c9c9c9; }
.panel-tabs .on { background: #fbfbfb; }
.panel-tabs .fold { width: 30px; border-right: 0; }
.panel-tools { display: flex; align-items: center; flex: none; gap: 7px; height: 37px; padding-left: 5px; border-bottom: 1px solid #c9c9c9; }
.panel-tools .opt { padding-left: 8px; border-left: 1px dotted #888; height: 24px; }
.panel-body { display: flex; flex: 1; min-height: 0; }
.thumbs { flex: none; width: 241px; margin: 0; padding: 0; overflow: hidden; background: #393939; list-style: none; }
.thumbs li { height: 220px; padding-top: 35px; color: #fff; text-align: center; font: 400 17px/24px "DejaVu Sans", sans-serif; }
.thumbs li.on { background: #6c6c6c; }
.thumbs svg { width: 180px; height: 127px; margin: 0 auto 32px 30px; background: #fff; box-shadow: 1px 3px 6px #0009; }
.vbar { flex: 1; }
.vbar-thumb { width: 11px; background: #868686; }
.panel .vbar { padding: 26px 0 120px 8px; }
.panel .vbar-thumb { height: 100%; }
.splitter { flex: none; width: 9px; border-left: 1px solid #c0c0c0; border-right: 1px solid #bbb; background: linear-gradient(90deg, #fff, #e0e0e0); }

.work { display: flex; flex-direction: column; flex: 1; min-width: 0; }
.canvas-row { display: flex; flex: 1; min-height: 0; }
.canvas {
  flex: 1;
  min-width: 0;
  padding: 20px 59px 0 44px;
  overflow: hidden;
  background:
    radial-gradient(ellipse 60px 36px at 100% 524px, #5a330ab0, #5a330a00),
    radial-gradient(ellipse 130px 26px at 57% 100%, #5a3405c0, #5a340500),
    radial-gradient(ellipse 130px 26px at 95% 100%, #5a3405c0, #5a340500),
    repeating-linear-gradient(#6b2d0000 0, #6b2d0010 3px, #ffb0500a 7px, #6b2d0000 13px),
    repeating-linear-gradient(#8a300000 0, #8a300010 17px, #ffb0500c 30px, #8a300000 41px),
    linear-gradient(#3a200f, #4a270e 20px, #6b3612 50px, #96501a 88px, #ae581b 125px, #b35e1f 400px, #b76a24 540px, #b06020 700px, #b3641f);
}
.sheet { background: #fff; box-shadow: 2px 4px 10px #0009; padding: 85px 114px 50px 98px; }
.sheet.next { height: 60px; margin-top: 15px; padding: 0; }
.caret-line { height: 56px; margin: 0; }
.caret { display: block; width: 3px; height: 22px; margin-left: -11px; background: #000; }
.compare {
  width: 100%;
  height: 977px;
  border-collapse: collapse;
  table-layout: fixed;
  font-size: 18px;
  font-weight: 300;
  line-height: 28px;
  color: #000;
}
.compare th { height: 30px; padding: 0; border: 1px solid #000; font-weight: 300; }
.compare td { height: 29px; padding: 0 0 0 8px; border: solid #000; border-width: 0 1px; white-space: nowrap; }
.compare .mid td { padding: 0; text-align: center; }
.compare .full { text-spacing-trim: space-all; }
.compare ins { color: #f00; text-decoration: underline 1px; text-underline-offset: 3px; text-decoration-skip-ink: none; }
.compare em { color: #f00; font-style: normal; }
.folio { margin: 32px 0 0; padding-left: 16px; text-align: center; font: 400 18px/24px "Liberation Serif", serif; color: #000; }

.doc-scroll { display: flex; flex-direction: column; flex: none; width: 26px; padding-bottom: 3px; background: #efefef; }
.doc-scroll .vbar { padding: 27px 0 0 8px; }
.doc-scroll .vbar-thumb { height: 169px; }
.doc-scroll button { height: 25px; border-top: 1px solid #ccc; background: #f5f5f5; }

.sheetbar { display: flex; align-items: stretch; flex: none; height: 27px; padding-top: 1px; background: #f2f2f2; font-size: 18px; font-weight: 300; }
.sheetbar button { border-right: 1px solid #ddd; }
.nudge { width: 24px; }
.sheetbar .stab { gap: 2px; width: 85px; background: #ececec; font-size: 17px; }
.sheetbar .stab.on { width: 137px; background: #fff; color: #000; font-size: 18px; }
.sheetbar .add { width: 25px; background: #e4e4e4; }
.filler { flex: none; width: 172px; border-right: 3px solid #c4c4c4; background: linear-gradient(90deg, #f0f0f0, #d8d8d8); }
.sheetbar .print { width: 42px; }
.pos { width: 56px; padding-left: 26px; white-space: nowrap; }
.sheetbar .zoom { gap: 5px; width: 106px; margin: 0 4px 0 12px; border: 0; }
.zoom i { font-size: 10px; color: #777; }
.sheetbar .pm { width: 18px; border: 0; }
.sheetbar input {
  appearance: none;
  flex: none;
  width: 150px;
  margin: 0 17px;
  background: linear-gradient(#0000 11px, #b0b0b0 11px, #b0b0b0 12px, #e6e6e6 12px, #e6e6e6 16px, #0000 16px);
}
.sheetbar input::-webkit-slider-thumb {
  appearance: none;
  width: 12px;
  height: 21px;
  border: 2px solid #777;
  border-radius: 3px 3px 7px 7px;
  background: #f4f4f4;
}
.hbar { display: flex; justify-content: space-between; flex: 1; margin-left: 10px; padding: 0 9px 0 8px; background: #efefef; }
.hbar button { border: 0; }
.corner { flex: none; width: 28px; border-left: 2px solid #c4c4c4; }

.sidebar {
  display: flex;
  flex-direction: column;
  flex: none;
  width: 34px;
  border-left: 1px solid #aaa;
  background: linear-gradient(90deg, #e2e2e2, #f8f8f8 30%, #efefef);
  color: #2e3a5c;
}
.sidebar button { height: 46px; }
.sidebar .fold { height: 40px; border-bottom: 1px solid #bbb; }
.kana { font-size: 22px; font-weight: 400; }
.style-a { font: italic 700 24px "Liberation Serif", serif; fill: #2e3a5c; }
.aa-s { font: 700 16px "Liberation Serif", serif; fill: #1f2740; }
.aa-l { font: 700 23px "Liberation Serif", serif; fill: #2a3556; }

.status {
  position: relative;
  display: flex;
  align-items: center;
  flex: none;
  gap: 3px;
  height: 33px;
  padding-left: 76px;
  border-top: 1px solid #aaa;
  background: linear-gradient(#e9e9e9, #cecece);
  font-size: 18px;
  font-weight: 300;
}
.flag { height: 27px; padding: 0 3px; border: 1px solid #888; }
.count { margin-left: 36px; padding-right: 22px; border-right: 1px solid #666; color: #3f66ee; font-weight: 400; }
.grip { position: absolute; right: 0; bottom: 0; }
```

FILE: thumbs.js
```javascript
// Page miniatures: each row is null (blank), "c" (centred heading), "h" (article title)
// or [left width, right width, red marks on both sides, left red run, right red run].
const pages = [
  ["c", null, "c", "h", [57, 57, [15]], null, "h", [35, 75, [], [21, 9], [21, 48]], null, "h",
   [68, 67, [21]], null, "h", [77, 66, [15], [46, 31], [46, 5]], [18, 0, [1]], null, "h",
   [54, 54, [15, 39]], [35, 12, []], [38, 38, [17]], [36, 36, [17]], [30, 12, []], [28, 6, [], [0, 28]],
   [7, 24, [], null, [0, 24]], [29, 12, []], [47, 47, [12]], null, "c", "h",
   [77, 62, [20], [41, 36], [41, 12]], [10, 0, [1]], [77, 6, [], [0, 77], null, 1]],
  ["h", [77, 77, [14, 23, 34]], [16, 25, []], [64, 6, [], [0, 64], null, 1], [77, 6, [], [0, 77], null, 1],
   [68, 0, [], [0, 68], null, 1], null, "h", [62, 70, [30, 35]], [72, 76, [10, 35]], null, "h",
   [66, 66, [47]], [40, 40, [22, 25]], [32, 12, []], [64, 6, [], [0, 64], null, 1], null, "c", "h",
   [32, 32, []], [13, 12, []], [14, 14, [12]], [12, 12, []], [13, 12, []], [15, 12, []], [12, 12, [11]], null, "h",
   [48, 48, [17]], [68, 68, [14, 22, 28, 34, 41]], null, "h", [46, 46, [15]], [76, 66, [12, 25], [46, 31]]],
  [[18, 0, []], [38, 38, [10, 24]], [48, 48, [10, 33]], [28, 28, [10]], [42, 12, []], [68, 12, []], [75, 12, []],
   [66, 0, []], null, "h", [54, 54, [38]], [58, 58, [35]], [77, 6, [], [0, 77], null, 1], [9, 0, [], [0, 9]], "c", "h",
   [77, 77, [16, 64]], [30, 30, []], [35, 35, [16]], [33, 33, [14]], [53, 53, [14]], [28, 12, []], [42, 12, []],
   [33, 12, []], [76, 76, [29]], [5, 5, []], null, "h", [30, 15, []], [77, 77, [50]], [35, 35, []],
   [77, 77, [24, 36, 42, 64]], [42, 42, []]],
  ["h", [33, 33, []], [36, 12, []], [37, 12, []], [28, 12, []], [35, 35, [16]], [28, 12, []], [38, 12, []],
   [47, 47, [24]], null, "h", [77, 77, [22, 56, 70]], [77, 77, [20]], [27, 27, []], [77, 77, [5, 45]], [10, 10, []],
   null, "h", [77, 77, [54]], [77, 77, [28, 33]], [5, 5, []], [77, 77, [51]], [5, 5, []], null, "h",
   [77, 77, [28]], [17, 17, []], [60, 12, []], [34, 34, [14]], [28, 12, []], [40, 12, []], [77, 9, []], [12, 0, []], "c"],
  ["h", [51, 15, []], null, "h", [68, 68, [18, 49]], [25, 12, []], [40, 12, []], [52, 12, []], null, "h",
   [64, 64, [45]], [77, 77, [7]], [72, 72, []], [77, 77, [26, 38, 44, 65]], [42, 42, []], null, "h",
   [76, 76, [24]], [77, 77, [18, 35, 64]], [30, 30, [5]], null, "h", [77, 77, [20, 74]], [77, 77, [42]], [12, 12, []],
   null, "c", null, "h", [75, 75, [16, 50]], null, "h", [47, 47, [26]], null, "h"],
  [[58, 58, [22]], [33, 12, []], [10, 12, []], [18, 12, []], [16, 12, []], null, "h", [74, 74, [33]], null, "h",
   [77, 77, [54]], [77, 77, [13, 19, 38]], [3, 3, []], null, "h", [77, 77, [33, 47]], [60, 60, [28]],
   [77, 77, [26, 75]], [77, 77, [7, 39]], [12, 12, []], null, "h", [77, 77, [33, 52]], [70, 70, []], [77, 77, [18, 40]]]
];
// Pages whose label fits in the visible part of the panel.
const labelled = 5;

const rect = (x, y, w, h, fill) => `<rect x="${x}" y="${y}" width="${w}" height="${h}" fill="${fill}"/>`;
const text = (x, y, w, color, seed) => {
  const dash = ["3 1 2 1 5 2 1 1", "2 1 4 1 1 1 3 2", "4 2 2 1 6 1 1 1"][seed % 3];
  return `<path d="M${x} ${y}h${w}" stroke="${color}" stroke-width="2" stroke-dasharray="${dash}" opacity=".45"/>`;
};

document.getElementById("thumbs").innerHTML = pages.map((rows, n) => {
  const top = n ? 9 : 18;
  let out = rect(10, n ? 9 : 15, 1, n ? 107 : 101, "#000") + rect(88, n ? 9 : 15, 1, n ? 107 : 101, "#000") +
    rect(167, n ? 9 : 15, 1, n ? 107 : 101, "#000") + text(87, 120, 5, "#555", n);
  if (!n) out += rect(10, 15, 158, 1, "#000") + rect(10, 18, 158, 1, "#000") + text(46, 17, 6, "#222", 0) + text(124, 17, 6, "#222", 0);
  rows.forEach((row, i) => {
    const y = top + 2 + i * 3;
    [11, 89].forEach((x, side) => {
      if (row === null) return;
      if (row === "c") { out += text(x + 32, y, 13, "#333", i); return; }
      if (row === "h") { out += text(x + 1, y, 5 + (i * 3 + n * 4) % 9, "#335", i); return; }
      const run = row[3 + side];
      if (row[side]) out += text(x, y, row[side], row[5] && !side ? "#f00" : (row[side] === 6 ? "#f00" : "#445"), i + n);
      if (row[side] > 6) row[2].forEach(m => { out += rect(x + m - 1, y + 1, 3, 1, "#f00"); });
      if (run) out += rect(x + run[0], y + 1, run[1], 1, "#f00");
    });
  });
  const label = n < labelled ? n + 1 : "";
  return `<li${n ? "" : ' class="on"'}><svg viewBox="0 0 180 127">${out}</svg>${label}</li>`;
}).join("");
```
